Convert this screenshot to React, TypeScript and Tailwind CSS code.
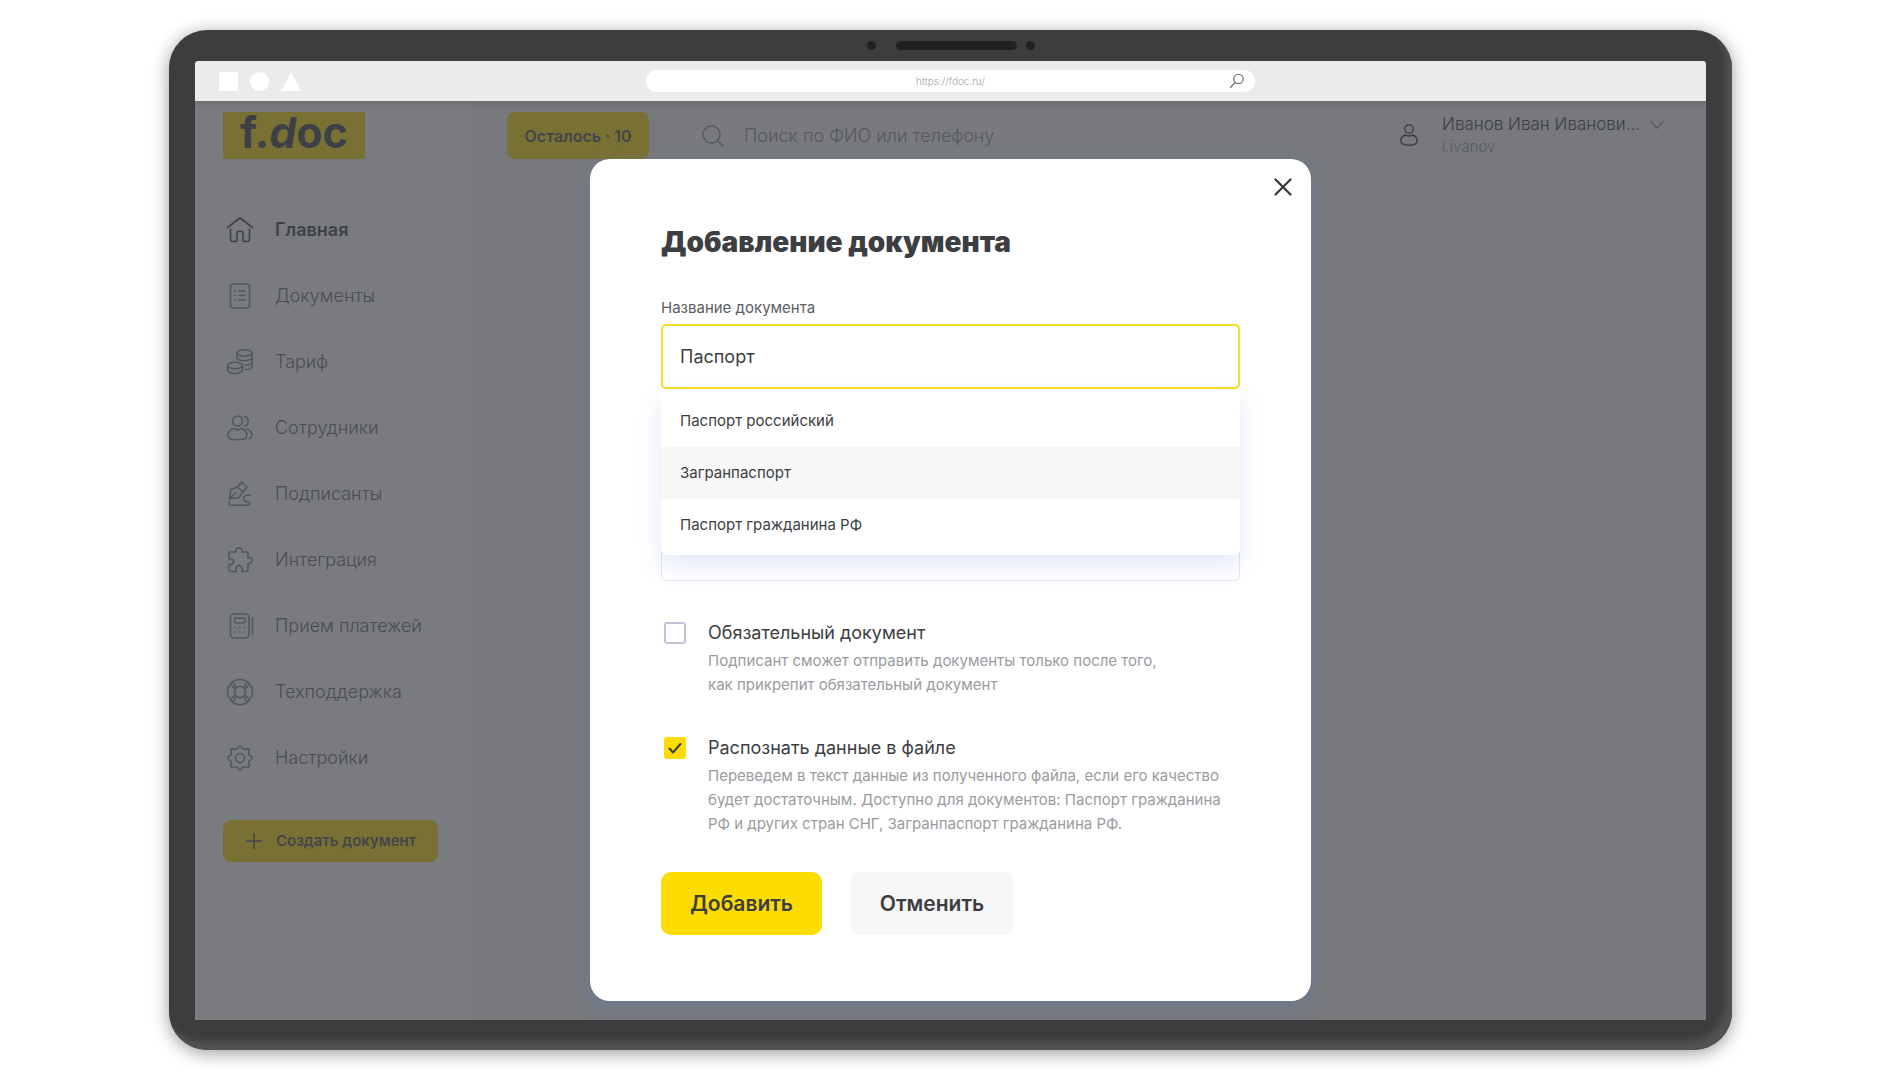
import { useState } from "react";
import type { ReactNode } from "react";

const menu = [
  { label: "Главная", icon: "home" },
  { label: "Документы", icon: "docs" },
  { label: "Тариф", icon: "coins" },
  { label: "Сотрудники", icon: "users" },
  { label: "Подписанты", icon: "sign" },
  { label: "Интеграция", icon: "puzzle" },
  { label: "Прием платежей", icon: "terminal" },
  { label: "Техподдержка", icon: "support" },
  { label: "Настройки", icon: "gear" },
];

const options = ["Паспорт российский", "Загранпаспорт", "Паспорт гражданина РФ"];

const icons: Record<string, ReactNode> = {
  home: (
    <>
      <path d="M1.5 11.5 14 2l12.500 9.500" />
      <path d="M4.500 13v10.500a2 2 0 0 0 2 2h3a1.500 1.500 0 0 0 1.500-1.500v-7a1.500 1.500 0 0 1 1.500-1.500h3a1.500 1.500 0 0 1 1.500 1.500v7a1.500 1.500 0 0 0 1.500 1.500h3a2 2 0 0 0 2-2V13" />
    </>
  ),
  docs: (
    <>
      <rect x="4.500" y="2" width="19" height="24" rx="3" />
      <path d="M13 9h6M13 13.500h6M13 18h6M9 9h.5M9 13.500h.5M9 18h.5" />
    </>
  ),
  coins: (
    <>
      <ellipse cx="18.500" cy="5" rx="7.500" ry="3.300" />
      <path d="M11 5v4.500c0 1.800 3.400 3.300 7.500 3.300S26 11.300 26 9.500V5" />
      <path d="M26 9.500V14c0 1.700-2.800 3-6.500 3.300M26 14v4.500c0 1.700-2.800 3-6.500 3.300" />
      <ellipse cx="9" cy="17.500" rx="7.500" ry="3.300" />
      <path d="M1.500 17.500V22c0 1.900 3.400 3.500 7.500 3.500s7.500-1.600 7.500-3.500v-4.500" />
    </>
  ),
  users: (
    <>
      <circle cx="11.500" cy="7" r="5" />
      <path d="M7 14.500c-3 1.500-5 4-5 7.500 0 2.800 4.500 3.700 9.500 3.700s9.500-.9 9.500-3.700c0-3.500-2-6-5-7.500-2.500 1.200-6.500 1.200-9 0Z" />
      <path d="M18 2.300c2.500.4 4.200 2.400 4.200 4.900s-1.700 4.500-3.700 5.100M21.500 15c2.500 1.300 4.500 3.800 4.500 6.500 0 1.500-1 2.500-2.500 3.200" />
    </>
  ),
  sign: (
    <>
      <path d="m16 2 5 5-4 5-5.500-5Z" />
      <path d="m11.500 7-7 2.500-1 9.500 9.500-1.500L17 12M3.500 19l6-6" />
      <path d="M3 21.500v2c0 1 .8 1.800 1.800 1.800h16.700c2.500 0 2.500-3.500 0-3.500-5 0-5.500-6.500.5-6.500h2.500" />
    </>
  ),
  puzzle: (
    <path d="M5 6h5c-1.500-5.500 7.500-5.500 6 0h4a2 2 0 0 1 2 2v4c5.500-1.500 5.500 6.500 0 5.500v6a2 2 0 0 1-2 2h-4v-2.500c0-4.500-6-4.500-6 0v2.500H5a2 2 0 0 1-2-2v-5h1.500c4 0 4-5.500 0-5.500H3V8a2 2 0 0 1 2-2Z" />
  ),
  terminal: (
    <>
      <rect x="4.500" y="2" width="18.500" height="24" rx="3.500" />
      <rect x="8.500" y="6" width="10.500" height="5" rx="1.500" />
      <path d="M26.500 6v16M9 15.500h.5M13.500 15.500h.5M18 15.500h.5M9 20h.5M13.500 20h.5M18 20h.5" />
    </>
  ),
  support: (
    <>
      <circle cx="14" cy="14" r="12.500" />
      <circle cx="14" cy="14" r="5.500" />
      <path d="m5.200 7.500 4.300 3.300M7.500 5.200l3.300 4.300M22.800 7.500l-4.300 3.300M20.500 5.200l-3.300 4.300M5.200 20.500l4.300-3.300M7.500 22.800l3.300-4.300M22.800 20.500l-4.300-3.300M20.500 22.800l-3.300-4.300" />
    </>
  ),
  gear: (
    <>
      <circle cx="14" cy="14" r="4.500" />
      <path d="M11.500 4.500c.6-1 .8-2.500 2.500-2.500s1.900 1.500 2.500 2.500c.7.900 1.800.9 2.700.6 1.200-.4 2.600-1 3.500 0s.4 2.300 0 3.500c-.3.900-.2 2 .7 2.600 1 .6 2.600.9 2.600 2.800s-1.600 2.200-2.600 2.800c-.9.600-1 1.700-.7 2.600.4 1.200 1 2.500 0 3.500s-2.300.4-3.500 0c-.9-.3-2-.3-2.700.6-.6 1-.8 2.500-2.500 2.500s-1.900-1.500-2.500-2.500c-.7-.9-1.800-.9-2.700-.6-1.200.4-2.600 1-3.500 0s-.4-2.300 0-3.500c.3-.9.200-2-.7-2.600-1-.6-2.600-.9-2.600-2.800s1.600-2.200 2.600-2.800c.9-.6 1-1.700.7-2.600-.4-1.200-1-2.500 0-3.500s2.300-.4 3.500 0c.9.300 2 .3 2.700-.6Z" />
    </>
  ),
};

function MenuIcon({ name }: { name: string }) {
  return (
    <svg
      viewBox="0 0 28 28"
      className="size-7 shrink-0"
      fill="none"
      stroke="currentColor"
      strokeWidth="1.6"
      strokeLinecap="round"
      strokeLinejoin="round"
    >
      {icons[name]}
    </svg>
  );
}

function BrowserBar() {
  return (
    <div className="relative z-10 flex h-10 items-center bg-[#ebebeb] px-6 shadow-[0_2px_6px_rgba(0,0,0,0.15)]">
      <div className="flex flex-1 items-center gap-3">
        <span className="size-[19px] bg-white" />
        <span className="size-[19px] rounded-full bg-white" />
        <svg viewBox="0 0 20 19" className="h-[19px] w-5 fill-white">
          <path d="M10 0 20 19H0Z" />
        </svg>
      </div>
      <div className="flex h-[22px] w-[609px] items-center rounded-full bg-white px-2.5">
        <span className="flex-1 pl-4 text-center text-[10px] font-light text-[#a3a3a3]">
          https://fdoc.ru/
        </span>
        <svg
          viewBox="0 0 16 16"
          className="size-4"
          fill="none"
          stroke="#777"
          strokeWidth="1.3"
          strokeLinecap="round"
        >
          <circle cx="9.500" cy="6" r="4.700" />
          <path d="m6 9.500-4.500 5" />
        </svg>
      </div>
      <div className="flex-1" />
    </div>
  );
}

function Sidebar() {
  return (
    <aside className="w-[277px] shrink-0 bg-white pl-7 pt-[11px]">
      <a
        href="#"
        className="flex h-[47px] w-[142px] items-center justify-center bg-[#fddc00] pb-2 text-[43px] leading-[50px] font-bold text-[#33363c]"
      >
        <span>
          f.<i>d</i>oc
        </span>
      </a>
      <nav className="mt-[38px]">
        {menu.map((item, i) => (
          <a
            key={item.label}
            href="#"
            className={`flex h-[66px] items-center gap-[21px] pl-[3px] text-lg ${
              i === 0 ? "font-semibold text-[#33363c]" : "font-light text-[#5c6068]"
            }`}
          >
            <span className={i === 0 ? "text-[#33363c]" : "text-[#7c878c]"}>
              <MenuIcon name={item.icon} />
            </span>
            {item.label}
          </a>
        ))}
      </nav>
      <button
        type="button"
        className="mt-[29px] flex h-[42px] w-[215px] items-center gap-3.5 rounded-lg bg-[#fddc00] pl-[23px] text-[15px] font-semibold whitespace-nowrap text-[#44464a]"
      >
        <svg viewBox="0 0 16 16" className="size-4" stroke="currentColor" strokeWidth="1.5">
          <path d="M8 0v16M0 8h16" />
        </svg>
        Создать документ
      </button>
    </aside>
  );
}

function TopBar() {
  return (
    <header className="flex items-start pt-[11px] pr-[42px] pl-[35px]">
      <button
        type="button"
        className="h-[47px] w-[142px] rounded-lg bg-[#fddc00] text-base font-semibold text-[#44464a]"
      >
        Осталось · 10
      </button>
      <div className="ml-9 flex h-[47px] w-[368px] items-center gap-5 rounded-lg bg-[#fafafa] pl-[17px] text-[#858991]">
        <svg
          viewBox="0 0 22 22"
          className="size-[22px] shrink-0"
          fill="none"
          stroke="currentColor"
          strokeWidth="1.5"
          strokeLinecap="round"
        >
          <circle cx="9.500" cy="9.500" r="8.500" />
          <path d="m15.500 15.500 5.500 5.500" />
        </svg>
        <input
          type="search"
          aria-label="Поиск"
          placeholder="Поиск по ФИО или телефону"
          className="w-full bg-transparent text-lg font-light outline-none placeholder:text-[#858991]"
        />
      </div>
      <div className="ml-auto flex items-center gap-6">
        <svg
          viewBox="0 0 18 22"
          className="h-[22px] w-[18px] text-[#33363c]"
          fill="none"
          stroke="currentColor"
          strokeWidth="1.5"
        >
          <circle cx="9" cy="5" r="4.200" />
          <path d="M5 11c-2.500 1.200-4.200 3.500-4.200 6 0 3.200 4 4.200 8.200 4.200s8.200-1 8.200-4.200c0-2.500-1.700-4.800-4.200-6-2.300 1.100-5.700 1.100-8 0Z" />
        </svg>
        <div className="w-[196px] whitespace-nowrap">
          <div className="text-[17px] leading-6 font-light text-[#2c2e33]">Иванов Иван Иванови...</div>
          <div className="text-[15px] leading-[22px] font-light text-[#90949b]">i.ivanov</div>
        </div>
        <svg
          viewBox="0 0 14 8"
          className="mb-5 -ml-3 h-2 w-3.5 text-[#858991]"
          fill="none"
          stroke="currentColor"
          strokeWidth="1.3"
        >
          <path d="m.5.5 6.500 6.500L13.500.5" />
        </svg>
      </div>
    </header>
  );
}

type CheckProps = {
  id: string;
  title: string;
  checked: boolean;
  onChange: (value: boolean) => void;
  children: ReactNode;
};

function Check({ id, title, checked, onChange, children }: CheckProps) {
  return (
    <div className="flex gap-[22px] pl-[3px]">
      <span className="relative mt-px size-[22px] shrink-0">
        <input
          type="checkbox"
          id={id}
          checked={checked}
          onChange={(e) => onChange(e.target.checked)}
          className="block size-[22px] appearance-none rounded-[3px] border-2 border-[#c5c2d8] bg-white checked:border-[#fddc00] checked:bg-[#fddc00]"
        />
        {checked && (
          <svg
            viewBox="0 0 22 22"
            className="pointer-events-none absolute inset-0"
            fill="none"
            stroke="#3d3e42"
            strokeWidth="2"
            strokeLinecap="round"
            strokeLinejoin="round"
          >
            <path d="m5.500 11.500 3.500 4 7.500-8.500" />
          </svg>
        )}
      </span>
      <div>
        <label htmlFor={id} className="block text-lg leading-6 text-[#3d3e42]">
          {title}
        </label>
        <p className="mt-1 text-[15px] leading-6 text-[#9a9b9f]">{children}</p>
      </div>
    </div>
  );
}

function DocumentModal() {
  const [name, setName] = useState("Паспорт");
  const [required, setRequired] = useState(false);
  const [recognize, setRecognize] = useState(true);

  return (
    <div
      role="dialog"
      aria-labelledby="modal-title"
      className="w-[721px] rounded-[20px] bg-white shadow-[0_6px_18px_rgba(95,125,190,0.35)]"
    >
      <div className="flex justify-end px-4 pt-4">
        <button type="button" aria-label="Закрыть" className="flex size-6 items-center justify-center">
          <svg viewBox="0 0 18 18" className="size-[18px]" stroke="#33363c" strokeWidth="2.200" strokeLinecap="round">
            <path d="m1.500 1.500 15 15M16.500 1.500l-15 15" />
          </svg>
        </button>
      </div>

      <form className="px-[71px] pt-[25px] pb-[66px]" onSubmit={(e) => e.preventDefault()}>
        <h2 id="modal-title" className="text-[28px] leading-9 font-black text-[#3d3e42]">
          Добавление документа
        </h2>

        <label htmlFor="doc-name" className="mt-9 block text-[15px] leading-6 text-[#5b5d62]">
          Название документа
        </label>
        <div className="relative mt-1">
          <input
            type="text"
            id="doc-name"
            value={name}
            onChange={(e) => setName(e.target.value)}
            className="block h-[65px] w-full rounded-[5px] border-2 border-[#f7dc26] px-[17px] text-lg text-[#3d3e42] outline-none"
          />
          <ul className="absolute inset-x-0 top-full mt-0.5 rounded-b-md bg-white py-1 shadow-[0_10px_24px_rgba(80,110,220,0.16)]">
            {options.map((option) => (
              <li key={option}>
                <button
                  type="button"
                  onClick={() => setName(option)}
                  className={`h-[52px] w-full px-[19px] text-left text-[15px] text-[#3d3e42] ${
                    option === "Загранпаспорт" ? "bg-[#f7f7f7]" : "bg-white"
                  }`}
                >
                  {option}
                </button>
              </li>
            ))}
          </ul>
        </div>
        <input
          type="text"
          aria-label="Описание"
          className="mt-32 block h-16 w-full rounded-[5px] border border-[#e4e6ee] px-[18px] text-lg outline-none"
        />

        <div className="mt-10 flex flex-col gap-[39px]">
          <Check
            id="required"
            title="Обязательный документ"
            checked={required}
            onChange={setRequired}
          >
            Подписант сможет отправить документы только после того,
            <br />
            как прикрепит обязательный документ
          </Check>
          <Check
            id="recognize"
            title="Распознать данные в файле"
            checked={recognize}
            onChange={setRecognize}
          >
            Переведем в текст данные из полученного файла, если его качество
            <br />
            будет достаточным. Доступно для документов: Паспорт гражданина
            <br />
            РФ и других стран СНГ, Загранпаспорт гражданина РФ.
          </Check>
        </div>

        <div className="mt-9 flex gap-7">
          <button
            type="submit"
            className="h-[63px] w-[161px] rounded-[10px] bg-[#fddc00] text-[21px] font-semibold text-[#3d3e42]"
          >
            Добавить
          </button>
          <button
            type="button"
            className="h-[63px] w-[164px] rounded-[10px] bg-[#f7f7f7] text-[21px] font-semibold text-[#3d3e42]"
          >
            Отменить
          </button>
        </div>
      </form>
    </div>
  );
}

export default function App() {
  return (
    <div className="flex min-h-screen bg-white px-[169px] py-[30px] font-['Inter',sans-serif]">
      <div className="flex flex-1 flex-col rounded-[38px] bg-[#3d3d3d] px-[26px] pb-[30px] shadow-[inset_-7px_-9px_6px_#525252,0_3px_18px_rgba(0,0,0,0.4)]">
        <div className="flex h-[31px] items-center justify-center">
          <span className="mr-5 size-[9px] rounded-full bg-[#212121]" />
          <span className="mr-[9px] h-[9px] w-[121px] rounded-full bg-[#212121]" />
          <span className="size-[9px] rounded-full bg-[#212121]" />
        </div>

        <div className="flex flex-1 flex-col overflow-hidden rounded-[3px]">
          <BrowserBar />
          <div className="grid flex-1 grid-cols-1">
            <div className="col-start-1 row-start-1 flex bg-[#f9f9f9]">
              <Sidebar />
              <main className="flex-1">
                <TopBar />
              </main>
            </div>
            <div className="z-[1] col-start-1 row-start-1 flex items-start justify-center bg-[#424549]/71 pt-[58px] pb-[18px]">
              <DocumentModal />
            </div>
          </div>
        </div>
      </div>
    </div>
  );
}
